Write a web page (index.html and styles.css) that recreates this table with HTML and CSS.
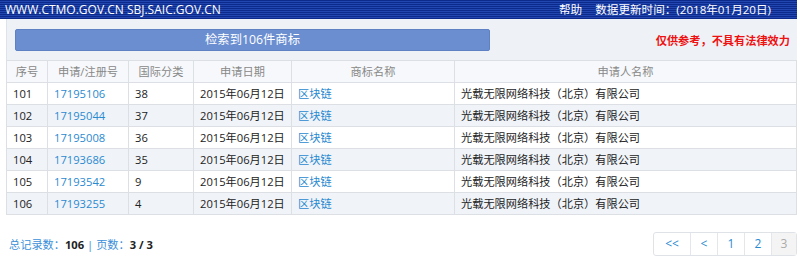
FILE: index.html
```html
<!DOCTYPE html>
<html lang="zh">
<head>
<meta charset="utf-8">
<link rel="stylesheet" href="styles.css">
</head>
<body>
<div class="topbar">
  <span class="site">WWW.CTMO.GOV.CN SBJ.SAIC.GOV.CN</span>
  <span class="right"><span class="help">帮助</span><span>数据更新时间：(2018年01月20日)</span></span>
</div>
<div class="main">
  <div class="bar">
    <div class="count">检索到106件商标</div>
    <div class="warn">仅供参考，不具有法律效力</div>
  </div>
  <table class="list">
    <thead>
      <tr><th class="c1">序号</th><th class="c2">申请/注册号</th><th class="c3">国际分类</th><th class="c4">申请日期</th><th class="c5">商标名称</th><th class="c6">申请人名称</th></tr>
    </thead>
    <tbody>
      <tr><td>101</td><td><a>17195106</a></td><td>38</td><td>2015年06月12日</td><td><a>区块链</a></td><td>光载无限网络科技（北京）有限公司</td></tr>
      <tr><td>102</td><td><a>17195044</a></td><td>37</td><td>2015年06月12日</td><td><a>区块链</a></td><td>光载无限网络科技（北京）有限公司</td></tr>
      <tr><td>103</td><td><a>17195008</a></td><td>36</td><td>2015年06月12日</td><td><a>区块链</a></td><td>光载无限网络科技（北京）有限公司</td></tr>
      <tr><td>104</td><td><a>17193686</a></td><td>35</td><td>2015年06月12日</td><td><a>区块链</a></td><td>光载无限网络科技（北京）有限公司</td></tr>
      <tr><td>105</td><td><a>17193542</a></td><td>9</td><td>2015年06月12日</td><td><a>区块链</a></td><td>光载无限网络科技（北京）有限公司</td></tr>
      <tr><td>106</td><td><a>17193255</a></td><td>4</td><td>2015年06月12日</td><td><a>区块链</a></td><td>光载无限网络科技（北京）有限公司</td></tr>
    </tbody>
  </table>
  <div class="foot">
    <div class="total"><span class="lbl">总记录数：</span><b>106</b> <span class="sep">|</span> <span class="lbl">页数：</span><b>3 / 3</b></div>
    <div class="pager"><a>&lt;&lt;</a><a>&lt;</a><a>1</a><a>2</a><span class="cur">3</span></div>
  </div>
</div>
</body>
</html>
```
FILE: styles.css
```css
* { box-sizing: border-box; }
body {
  margin: 0;
  font-family: "Open Sans", "Noto Sans CJK SC", sans-serif;
  font-size: 11.2px;
  color: #333;
  background: #fff;
}
.topbar {
  width: 797px;
  height: 19px;
  background: repeating-linear-gradient(to bottom, #0b2a8c 0, #0b2a8c 1px, #2146b0 1px, #2146b0 2px);
  color: #fff;
  display: flex;
  justify-content: space-between;
  align-items: center;
  padding: 0 26px 0 5px;
  line-height: 19px;
  font-size: 12px;
}
.right { font-size: 11.6px; }
.help { margin-right: 13px; }
.main {
  width: 791px;
  margin-left: 6px;
}
.bar {
  background: #eef2f7;
  border-left: 1px solid #dde3ea;
  height: 41px;
  display: flex;
  align-items: center;
  justify-content: space-between;
  padding: 0 7px 0 8px;
}
.count {
  width: 475px;
  height: 22px;
  background: #6a8ed0;
  border: 1px solid #5d81c4;
  border-radius: 2px;
  color: #fff;
  text-align: center;
  line-height: 20px;
  font-size: 12.3px;
}
.warn {
  color: #ee1111;
  font-weight: bold;
  font-size: 11.2px;
}
.list {
  width: 791px;
  border-collapse: collapse;
  table-layout: fixed;
}
.list th, .list td {
  border: 1px solid #dcdfe3;
  height: 22px;
  padding: 0 6px;
  white-space: nowrap;
  font-weight: normal;
  line-height: 20px;
}
.list th {
  color: #888;
  background: #f6f8fb;
  text-align: center;
}
.list td { color: #222; }
.list tbody tr:nth-child(even) td { background: #f0f4f9; }
.list a { color: #2a8ad0; }
.c1 { width: 41px; }
.c2 { width: 81px; }
.c3 { width: 65px; }
.c4 { width: 98px; }
.c5 { width: 163px; }
.foot {
  display: flex;
  justify-content: space-between;
  align-items: center;
  margin-top: 17px;
}
.total { padding-left: 3px; color: #222; }
.total .lbl, .total .sep { color: #3b8fd8; }
.total b { font-weight: bold; }
.pager {
  display: flex;
  border: 1px solid #dfe2e6;
  border-radius: 3px;
  height: 24px;
  font-size: 12px;
}
.pager a, .pager span {
  display: block;
  height: 22px;
  line-height: 22px;
  text-align: center;
  color: #2a8ad0;
  border-left: 1px solid #e3e6ea;
  width: 27px;
}
.pager a:first-child { border-left: 0; width: 36px; }
.pager .cur { color: #aaa; background: #f4f4f4; width: 25px; }
```
